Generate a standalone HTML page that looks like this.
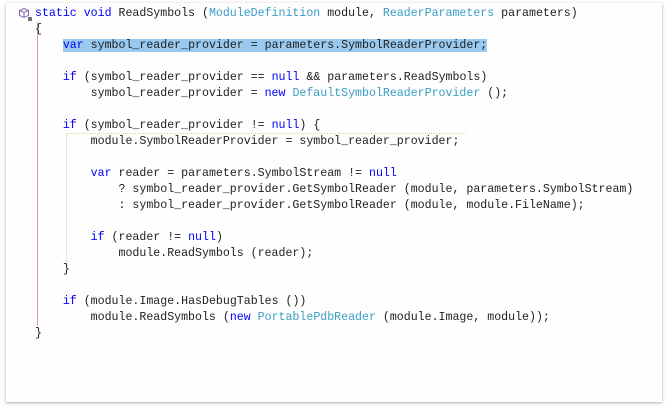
<!DOCTYPE html>
<html><head><style>
html,body{margin:0;padding:0;background:#fff;width:668px;height:412px;overflow:hidden}
.panel{position:absolute;left:6px;top:3px;width:656px;height:399px;background:#fefefe;box-shadow:0 1px 3px rgba(0,0,0,.35)}
pre{position:absolute;left:35px;top:6px;margin:0;font-family:"Liberation Mono",monospace;font-size:11.6px;line-height:16px;color:#1e1e1e}
.k{color:#0000ff}.t{color:#3a9ec6}
.hl{background:#99c9ef}
.vl{position:absolute;left:37px;top:22px;width:1px;height:304px;background:#d8a0a0}
.dl{position:absolute;left:66px;top:133px;width:0;height:135px;border-left:1px dotted #e0c080}
.dh{position:absolute;left:66px;top:133px;width:400px;height:0;border-top:1px dotted #e8d0a0}
</style></head><body>
<div class="panel"></div>
<div class="vl"></div><div class="dl"></div><div class="dh"></div>
<svg style="position:absolute;left:18px;top:7px" width="16" height="16" viewBox="0 0 16 16">
<path d="M6 1.5 L10.5 3.5 L10.5 8.5 L6 10.5 L1.5 8.5 L1.5 3.5 Z M1.5 3.5 L6 5.5 L10.5 3.5 M6 5.5 L6 10.5" fill="none" stroke="#8a6aa8" stroke-width="1"/>
<rect x="10" y="10" width="4" height="4" fill="#707070"/>
</svg>
<pre><span class="k">static void</span> ReadSymbols (<span class="t">ModuleDefinition</span> module, <span class="t">ReaderParameters</span> parameters)
{
    <span class="hl"><span class="k">var</span> symbol_reader_provider = parameters.SymbolReaderProvider;</span>

    <span class="k">if</span> (symbol_reader_provider == <span class="k">null</span> &amp;&amp; parameters.ReadSymbols)
        symbol_reader_provider = <span class="k">new</span> <span class="t">DefaultSymbolReaderProvider</span> ();

    <span class="k">if</span> (symbol_reader_provider != <span class="k">null</span>) {
        module.SymbolReaderProvider = symbol_reader_provider;

        <span class="k">var</span> reader = parameters.SymbolStream != <span class="k">null</span>
            ? symbol_reader_provider.GetSymbolReader (module, parameters.SymbolStream)
            : symbol_reader_provider.GetSymbolReader (module, module.FileName);

        <span class="k">if</span> (reader != <span class="k">null</span>)
            module.ReadSymbols (reader);
    }

    <span class="k">if</span> (module.Image.HasDebugTables ())
        module.ReadSymbols (<span class="k">new</span> <span class="t">PortablePdbReader</span> (module.Image, module));
}</pre>
</body></html>
